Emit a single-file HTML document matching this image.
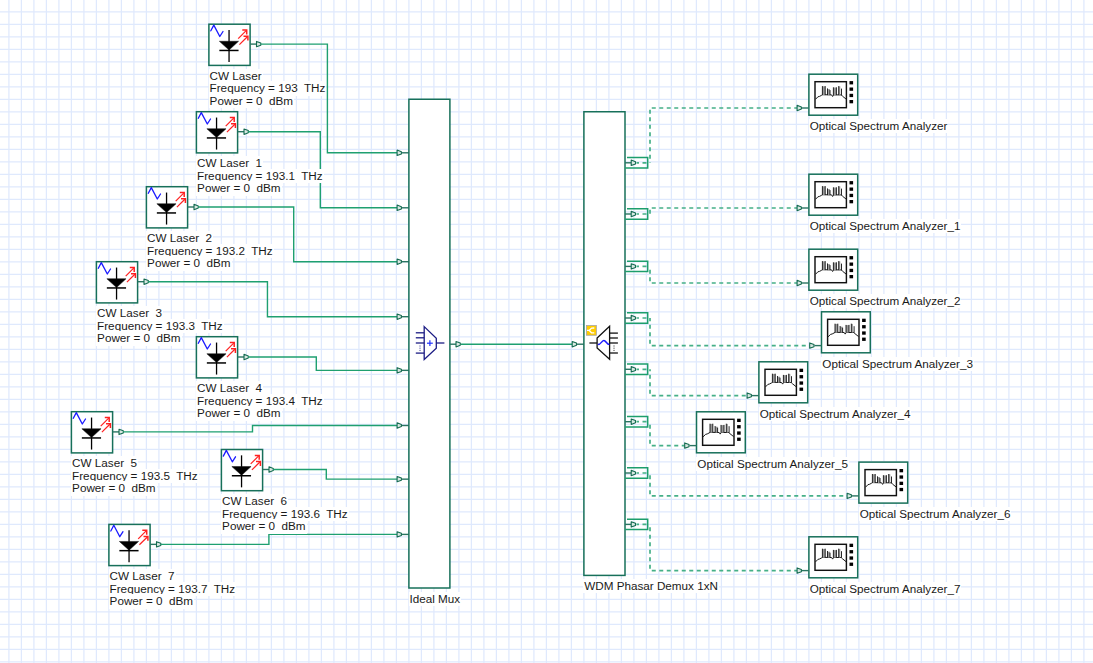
<!DOCTYPE html>
<html><head><meta charset="utf-8"><style>
html,body{margin:0;padding:0;width:1093px;height:663px;overflow:hidden;background:#fff}
.t{position:absolute;font-family:"Liberation Sans",sans-serif;font-size:11.7px;line-height:12.5px;color:#1a1a1a;white-space:nowrap}
.t span{background:#fff;padding:0 1px 1.5px 1px;margin-left:-1px}
svg{position:absolute;left:0;top:0}
#wrap{position:absolute;left:0;top:0;width:1093px;height:663px;filter:none}
</style></head><body><div id="wrap">
<svg width="1093" height="663" viewBox="0 0 1093 663">
<g stroke="#dfe9fd" stroke-width="1.25"><line x1="8.90" y1="0" x2="8.90" y2="663"/><line x1="21.40" y1="0" x2="21.40" y2="663"/><line x1="33.90" y1="0" x2="33.90" y2="663"/><line x1="46.40" y1="0" x2="46.40" y2="663"/><line x1="58.90" y1="0" x2="58.90" y2="663"/><line x1="71.40" y1="0" x2="71.40" y2="663"/><line x1="83.90" y1="0" x2="83.90" y2="663"/><line x1="96.40" y1="0" x2="96.40" y2="663"/><line x1="108.90" y1="0" x2="108.90" y2="663"/><line x1="121.40" y1="0" x2="121.40" y2="663"/><line x1="133.90" y1="0" x2="133.90" y2="663"/><line x1="146.40" y1="0" x2="146.40" y2="663"/><line x1="158.90" y1="0" x2="158.90" y2="663"/><line x1="171.40" y1="0" x2="171.40" y2="663"/><line x1="183.90" y1="0" x2="183.90" y2="663"/><line x1="196.40" y1="0" x2="196.40" y2="663"/><line x1="208.90" y1="0" x2="208.90" y2="663"/><line x1="221.40" y1="0" x2="221.40" y2="663"/><line x1="233.90" y1="0" x2="233.90" y2="663"/><line x1="246.40" y1="0" x2="246.40" y2="663"/><line x1="258.90" y1="0" x2="258.90" y2="663"/><line x1="271.40" y1="0" x2="271.40" y2="663"/><line x1="283.90" y1="0" x2="283.90" y2="663"/><line x1="296.40" y1="0" x2="296.40" y2="663"/><line x1="308.90" y1="0" x2="308.90" y2="663"/><line x1="321.40" y1="0" x2="321.40" y2="663"/><line x1="333.90" y1="0" x2="333.90" y2="663"/><line x1="346.40" y1="0" x2="346.40" y2="663"/><line x1="358.90" y1="0" x2="358.90" y2="663"/><line x1="371.40" y1="0" x2="371.40" y2="663"/><line x1="383.90" y1="0" x2="383.90" y2="663"/><line x1="396.40" y1="0" x2="396.40" y2="663"/><line x1="408.90" y1="0" x2="408.90" y2="663"/><line x1="421.40" y1="0" x2="421.40" y2="663"/><line x1="433.90" y1="0" x2="433.90" y2="663"/><line x1="446.40" y1="0" x2="446.40" y2="663"/><line x1="458.90" y1="0" x2="458.90" y2="663"/><line x1="471.40" y1="0" x2="471.40" y2="663"/><line x1="483.90" y1="0" x2="483.90" y2="663"/><line x1="496.40" y1="0" x2="496.40" y2="663"/><line x1="508.90" y1="0" x2="508.90" y2="663"/><line x1="521.40" y1="0" x2="521.40" y2="663"/><line x1="533.90" y1="0" x2="533.90" y2="663"/><line x1="546.40" y1="0" x2="546.40" y2="663"/><line x1="558.90" y1="0" x2="558.90" y2="663"/><line x1="571.40" y1="0" x2="571.40" y2="663"/><line x1="583.90" y1="0" x2="583.90" y2="663"/><line x1="596.40" y1="0" x2="596.40" y2="663"/><line x1="608.90" y1="0" x2="608.90" y2="663"/><line x1="621.40" y1="0" x2="621.40" y2="663"/><line x1="633.90" y1="0" x2="633.90" y2="663"/><line x1="646.40" y1="0" x2="646.40" y2="663"/><line x1="658.90" y1="0" x2="658.90" y2="663"/><line x1="671.40" y1="0" x2="671.40" y2="663"/><line x1="683.90" y1="0" x2="683.90" y2="663"/><line x1="696.40" y1="0" x2="696.40" y2="663"/><line x1="708.90" y1="0" x2="708.90" y2="663"/><line x1="721.40" y1="0" x2="721.40" y2="663"/><line x1="733.90" y1="0" x2="733.90" y2="663"/><line x1="746.40" y1="0" x2="746.40" y2="663"/><line x1="758.90" y1="0" x2="758.90" y2="663"/><line x1="771.40" y1="0" x2="771.40" y2="663"/><line x1="783.90" y1="0" x2="783.90" y2="663"/><line x1="796.40" y1="0" x2="796.40" y2="663"/><line x1="808.90" y1="0" x2="808.90" y2="663"/><line x1="821.40" y1="0" x2="821.40" y2="663"/><line x1="833.90" y1="0" x2="833.90" y2="663"/><line x1="846.40" y1="0" x2="846.40" y2="663"/><line x1="858.90" y1="0" x2="858.90" y2="663"/><line x1="871.40" y1="0" x2="871.40" y2="663"/><line x1="883.90" y1="0" x2="883.90" y2="663"/><line x1="896.40" y1="0" x2="896.40" y2="663"/><line x1="908.90" y1="0" x2="908.90" y2="663"/><line x1="921.40" y1="0" x2="921.40" y2="663"/><line x1="933.90" y1="0" x2="933.90" y2="663"/><line x1="946.40" y1="0" x2="946.40" y2="663"/><line x1="958.90" y1="0" x2="958.90" y2="663"/><line x1="971.40" y1="0" x2="971.40" y2="663"/><line x1="983.90" y1="0" x2="983.90" y2="663"/><line x1="996.40" y1="0" x2="996.40" y2="663"/><line x1="1008.90" y1="0" x2="1008.90" y2="663"/><line x1="1021.40" y1="0" x2="1021.40" y2="663"/><line x1="1033.90" y1="0" x2="1033.90" y2="663"/><line x1="1046.40" y1="0" x2="1046.40" y2="663"/><line x1="1058.90" y1="0" x2="1058.90" y2="663"/><line x1="1071.40" y1="0" x2="1071.40" y2="663"/><line x1="1083.90" y1="0" x2="1083.90" y2="663"/><line x1="0" y1="11.75" x2="1093" y2="11.75"/><line x1="0" y1="24.25" x2="1093" y2="24.25"/><line x1="0" y1="36.75" x2="1093" y2="36.75"/><line x1="0" y1="49.25" x2="1093" y2="49.25"/><line x1="0" y1="61.75" x2="1093" y2="61.75"/><line x1="0" y1="74.25" x2="1093" y2="74.25"/><line x1="0" y1="86.75" x2="1093" y2="86.75"/><line x1="0" y1="99.25" x2="1093" y2="99.25"/><line x1="0" y1="111.75" x2="1093" y2="111.75"/><line x1="0" y1="124.25" x2="1093" y2="124.25"/><line x1="0" y1="136.75" x2="1093" y2="136.75"/><line x1="0" y1="149.25" x2="1093" y2="149.25"/><line x1="0" y1="161.75" x2="1093" y2="161.75"/><line x1="0" y1="174.25" x2="1093" y2="174.25"/><line x1="0" y1="186.75" x2="1093" y2="186.75"/><line x1="0" y1="199.25" x2="1093" y2="199.25"/><line x1="0" y1="211.75" x2="1093" y2="211.75"/><line x1="0" y1="224.25" x2="1093" y2="224.25"/><line x1="0" y1="236.75" x2="1093" y2="236.75"/><line x1="0" y1="249.25" x2="1093" y2="249.25"/><line x1="0" y1="261.75" x2="1093" y2="261.75"/><line x1="0" y1="274.25" x2="1093" y2="274.25"/><line x1="0" y1="286.75" x2="1093" y2="286.75"/><line x1="0" y1="299.25" x2="1093" y2="299.25"/><line x1="0" y1="311.75" x2="1093" y2="311.75"/><line x1="0" y1="324.25" x2="1093" y2="324.25"/><line x1="0" y1="336.75" x2="1093" y2="336.75"/><line x1="0" y1="349.25" x2="1093" y2="349.25"/><line x1="0" y1="361.75" x2="1093" y2="361.75"/><line x1="0" y1="374.25" x2="1093" y2="374.25"/><line x1="0" y1="386.75" x2="1093" y2="386.75"/><line x1="0" y1="399.25" x2="1093" y2="399.25"/><line x1="0" y1="411.75" x2="1093" y2="411.75"/><line x1="0" y1="424.25" x2="1093" y2="424.25"/><line x1="0" y1="436.75" x2="1093" y2="436.75"/><line x1="0" y1="449.25" x2="1093" y2="449.25"/><line x1="0" y1="461.75" x2="1093" y2="461.75"/><line x1="0" y1="474.25" x2="1093" y2="474.25"/><line x1="0" y1="486.75" x2="1093" y2="486.75"/><line x1="0" y1="499.25" x2="1093" y2="499.25"/><line x1="0" y1="511.75" x2="1093" y2="511.75"/><line x1="0" y1="524.25" x2="1093" y2="524.25"/><line x1="0" y1="536.75" x2="1093" y2="536.75"/><line x1="0" y1="549.25" x2="1093" y2="549.25"/><line x1="0" y1="561.75" x2="1093" y2="561.75"/><line x1="0" y1="574.25" x2="1093" y2="574.25"/><line x1="0" y1="586.75" x2="1093" y2="586.75"/><line x1="0" y1="599.25" x2="1093" y2="599.25"/><line x1="0" y1="611.75" x2="1093" y2="611.75"/><line x1="0" y1="624.25" x2="1093" y2="624.25"/><line x1="0" y1="636.75" x2="1093" y2="636.75"/><line x1="0" y1="649.25" x2="1093" y2="649.25"/><line x1="0" y1="661.75" x2="1093" y2="661.75"/></g>
<g fill="none">
<rect x="208.90" y="24.20" width="41.20" height="41.20" stroke="#17705a" stroke-width="1.5" fill="#fff"/>
<line x1="229.05" y1="30.05" x2="229.05" y2="62.05" stroke="#000" stroke-width="1.3" />
<polygon points="219.35,41.25 238.55,41.25 229.05,50.05" stroke="#111" stroke-width="0.5" fill="#000" />
<line x1="219.35" y1="50.45" x2="238.55" y2="50.45" stroke="#000" stroke-width="1.5" />
<polyline points="210.80,30.80 213.80,25.10 219.80,36.50 223.00,31.50" stroke="#1a1aff" stroke-width="1.3" fill="none" stroke-linejoin="round" stroke-linecap="round"/>
<line x1="238.20" y1="38.60" x2="246.40" y2="30.40" stroke="#ff2020" stroke-width="1.2" />
<polyline points="242.30,30.10 246.70,30.10 246.70,34.50" stroke="#ff2020" stroke-width="1.5" fill="none" stroke-linejoin="miter"/>
<line x1="239.40" y1="44.60" x2="247.60" y2="36.50" stroke="#ff2020" stroke-width="1.2" />
<polyline points="243.50,36.20 247.90,36.20 247.90,40.60" stroke="#ff2020" stroke-width="1.5" fill="none" stroke-linejoin="miter"/>
<line x1="250.10" y1="44.10" x2="256.50" y2="44.10" stroke="#2a7562" stroke-width="1.4" />
<polygon points="256.50,41.40 260.80,43.00 260.80,45.20 256.50,46.80" stroke="#146a50" stroke-width="1.1" fill="#d8e9e2" stroke-linejoin="round"/>
<rect x="196.40" y="111.70" width="41.20" height="41.20" stroke="#17705a" stroke-width="1.5" fill="#fff"/>
<line x1="216.55" y1="117.55" x2="216.55" y2="149.55" stroke="#000" stroke-width="1.3" />
<polygon points="206.85,128.75 226.05,128.75 216.55,137.55" stroke="#111" stroke-width="0.5" fill="#000" />
<line x1="206.85" y1="137.95" x2="226.05" y2="137.95" stroke="#000" stroke-width="1.5" />
<polyline points="198.30,118.30 201.30,112.60 207.30,124.00 210.50,119.00" stroke="#1a1aff" stroke-width="1.3" fill="none" stroke-linejoin="round" stroke-linecap="round"/>
<line x1="225.70" y1="126.10" x2="233.90" y2="117.90" stroke="#ff2020" stroke-width="1.2" />
<polyline points="229.80,117.60 234.20,117.60 234.20,122.00" stroke="#ff2020" stroke-width="1.5" fill="none" stroke-linejoin="miter"/>
<line x1="226.90" y1="132.10" x2="235.10" y2="124.00" stroke="#ff2020" stroke-width="1.2" />
<polyline points="231.00,123.70 235.40,123.70 235.40,128.10" stroke="#ff2020" stroke-width="1.5" fill="none" stroke-linejoin="miter"/>
<line x1="237.60" y1="131.70" x2="244.00" y2="131.70" stroke="#2a7562" stroke-width="1.4" />
<polygon points="244.00,129.00 248.30,130.60 248.30,132.80 244.00,134.40" stroke="#146a50" stroke-width="1.1" fill="#d8e9e2" stroke-linejoin="round"/>
<rect x="146.40" y="186.70" width="41.20" height="41.20" stroke="#17705a" stroke-width="1.5" fill="#fff"/>
<line x1="166.55" y1="192.55" x2="166.55" y2="224.55" stroke="#000" stroke-width="1.3" />
<polygon points="156.85,203.75 176.05,203.75 166.55,212.55" stroke="#111" stroke-width="0.5" fill="#000" />
<line x1="156.85" y1="212.95" x2="176.05" y2="212.95" stroke="#000" stroke-width="1.5" />
<polyline points="148.30,193.30 151.30,187.60 157.30,199.00 160.50,194.00" stroke="#1a1aff" stroke-width="1.3" fill="none" stroke-linejoin="round" stroke-linecap="round"/>
<line x1="175.70" y1="201.10" x2="183.90" y2="192.90" stroke="#ff2020" stroke-width="1.2" />
<polyline points="179.80,192.60 184.20,192.60 184.20,197.00" stroke="#ff2020" stroke-width="1.5" fill="none" stroke-linejoin="miter"/>
<line x1="176.90" y1="207.10" x2="185.10" y2="199.00" stroke="#ff2020" stroke-width="1.2" />
<polyline points="181.00,198.70 185.40,198.70 185.40,203.10" stroke="#ff2020" stroke-width="1.5" fill="none" stroke-linejoin="miter"/>
<line x1="187.60" y1="207.00" x2="194.00" y2="207.00" stroke="#2a7562" stroke-width="1.4" />
<polygon points="194.00,204.30 198.30,205.90 198.30,208.10 194.00,209.70" stroke="#146a50" stroke-width="1.1" fill="#d8e9e2" stroke-linejoin="round"/>
<rect x="96.40" y="261.70" width="41.20" height="41.20" stroke="#17705a" stroke-width="1.5" fill="#fff"/>
<line x1="116.55" y1="267.55" x2="116.55" y2="299.55" stroke="#000" stroke-width="1.3" />
<polygon points="106.85,278.75 126.05,278.75 116.55,287.55" stroke="#111" stroke-width="0.5" fill="#000" />
<line x1="106.85" y1="287.95" x2="126.05" y2="287.95" stroke="#000" stroke-width="1.5" />
<polyline points="98.30,268.30 101.30,262.60 107.30,274.00 110.50,269.00" stroke="#1a1aff" stroke-width="1.3" fill="none" stroke-linejoin="round" stroke-linecap="round"/>
<line x1="125.70" y1="276.10" x2="133.90" y2="267.90" stroke="#ff2020" stroke-width="1.2" />
<polyline points="129.80,267.60 134.20,267.60 134.20,272.00" stroke="#ff2020" stroke-width="1.5" fill="none" stroke-linejoin="miter"/>
<line x1="126.90" y1="282.10" x2="135.10" y2="274.00" stroke="#ff2020" stroke-width="1.2" />
<polyline points="131.00,273.70 135.40,273.70 135.40,278.10" stroke="#ff2020" stroke-width="1.5" fill="none" stroke-linejoin="miter"/>
<line x1="137.60" y1="281.70" x2="144.00" y2="281.70" stroke="#2a7562" stroke-width="1.4" />
<polygon points="144.00,279.00 148.30,280.60 148.30,282.80 144.00,284.40" stroke="#146a50" stroke-width="1.1" fill="#d8e9e2" stroke-linejoin="round"/>
<rect x="196.40" y="336.70" width="41.20" height="41.20" stroke="#17705a" stroke-width="1.5" fill="#fff"/>
<line x1="216.55" y1="342.55" x2="216.55" y2="374.55" stroke="#000" stroke-width="1.3" />
<polygon points="206.85,353.75 226.05,353.75 216.55,362.55" stroke="#111" stroke-width="0.5" fill="#000" />
<line x1="206.85" y1="362.95" x2="226.05" y2="362.95" stroke="#000" stroke-width="1.5" />
<polyline points="198.30,343.30 201.30,337.60 207.30,349.00 210.50,344.00" stroke="#1a1aff" stroke-width="1.3" fill="none" stroke-linejoin="round" stroke-linecap="round"/>
<line x1="225.70" y1="351.10" x2="233.90" y2="342.90" stroke="#ff2020" stroke-width="1.2" />
<polyline points="229.80,342.60 234.20,342.60 234.20,347.00" stroke="#ff2020" stroke-width="1.5" fill="none" stroke-linejoin="miter"/>
<line x1="226.90" y1="357.10" x2="235.10" y2="349.00" stroke="#ff2020" stroke-width="1.2" />
<polyline points="231.00,348.70 235.40,348.70 235.40,353.10" stroke="#ff2020" stroke-width="1.5" fill="none" stroke-linejoin="miter"/>
<line x1="237.60" y1="357.00" x2="244.00" y2="357.00" stroke="#2a7562" stroke-width="1.4" />
<polygon points="244.00,354.30 248.30,355.90 248.30,358.10 244.00,359.70" stroke="#146a50" stroke-width="1.1" fill="#d8e9e2" stroke-linejoin="round"/>
<rect x="71.40" y="411.70" width="41.20" height="41.20" stroke="#17705a" stroke-width="1.5" fill="#fff"/>
<line x1="91.55" y1="417.55" x2="91.55" y2="449.55" stroke="#000" stroke-width="1.3" />
<polygon points="81.85,428.75 101.05,428.75 91.55,437.55" stroke="#111" stroke-width="0.5" fill="#000" />
<line x1="81.85" y1="437.95" x2="101.05" y2="437.95" stroke="#000" stroke-width="1.5" />
<polyline points="73.30,418.30 76.30,412.60 82.30,424.00 85.50,419.00" stroke="#1a1aff" stroke-width="1.3" fill="none" stroke-linejoin="round" stroke-linecap="round"/>
<line x1="100.70" y1="426.10" x2="108.90" y2="417.90" stroke="#ff2020" stroke-width="1.2" />
<polyline points="104.80,417.60 109.20,417.60 109.20,422.00" stroke="#ff2020" stroke-width="1.5" fill="none" stroke-linejoin="miter"/>
<line x1="101.90" y1="432.10" x2="110.10" y2="424.00" stroke="#ff2020" stroke-width="1.2" />
<polyline points="106.00,423.70 110.40,423.70 110.40,428.10" stroke="#ff2020" stroke-width="1.5" fill="none" stroke-linejoin="miter"/>
<line x1="112.60" y1="431.90" x2="119.00" y2="431.90" stroke="#2a7562" stroke-width="1.4" />
<polygon points="119.00,429.20 123.30,430.80 123.30,433.00 119.00,434.60" stroke="#146a50" stroke-width="1.1" fill="#d8e9e2" stroke-linejoin="round"/>
<rect x="221.40" y="449.50" width="41.20" height="41.20" stroke="#17705a" stroke-width="1.5" fill="#fff"/>
<line x1="241.55" y1="455.35" x2="241.55" y2="487.35" stroke="#000" stroke-width="1.3" />
<polygon points="231.85,466.55 251.05,466.55 241.55,475.35" stroke="#111" stroke-width="0.5" fill="#000" />
<line x1="231.85" y1="475.75" x2="251.05" y2="475.75" stroke="#000" stroke-width="1.5" />
<polyline points="223.30,456.10 226.30,450.40 232.30,461.80 235.50,456.80" stroke="#1a1aff" stroke-width="1.3" fill="none" stroke-linejoin="round" stroke-linecap="round"/>
<line x1="250.70" y1="463.90" x2="258.90" y2="455.70" stroke="#ff2020" stroke-width="1.2" />
<polyline points="254.80,455.40 259.20,455.40 259.20,459.80" stroke="#ff2020" stroke-width="1.5" fill="none" stroke-linejoin="miter"/>
<line x1="251.90" y1="469.90" x2="260.10" y2="461.80" stroke="#ff2020" stroke-width="1.2" />
<polyline points="256.00,461.50 260.40,461.50 260.40,465.90" stroke="#ff2020" stroke-width="1.5" fill="none" stroke-linejoin="miter"/>
<line x1="262.60" y1="469.50" x2="269.00" y2="469.50" stroke="#2a7562" stroke-width="1.4" />
<polygon points="269.00,466.80 273.30,468.40 273.30,470.60 269.00,472.20" stroke="#146a50" stroke-width="1.1" fill="#d8e9e2" stroke-linejoin="round"/>
<rect x="108.90" y="524.40" width="41.20" height="41.20" stroke="#17705a" stroke-width="1.5" fill="#fff"/>
<line x1="129.05" y1="530.25" x2="129.05" y2="562.25" stroke="#000" stroke-width="1.3" />
<polygon points="119.35,541.45 138.55,541.45 129.05,550.25" stroke="#111" stroke-width="0.5" fill="#000" />
<line x1="119.35" y1="550.65" x2="138.55" y2="550.65" stroke="#000" stroke-width="1.5" />
<polyline points="110.80,531.00 113.80,525.30 119.80,536.70 123.00,531.70" stroke="#1a1aff" stroke-width="1.3" fill="none" stroke-linejoin="round" stroke-linecap="round"/>
<line x1="138.20" y1="538.80" x2="146.40" y2="530.60" stroke="#ff2020" stroke-width="1.2" />
<polyline points="142.30,530.30 146.70,530.30 146.70,534.70" stroke="#ff2020" stroke-width="1.5" fill="none" stroke-linejoin="miter"/>
<line x1="139.40" y1="544.80" x2="147.60" y2="536.70" stroke="#ff2020" stroke-width="1.2" />
<polyline points="143.50,536.40 147.90,536.40 147.90,540.80" stroke="#ff2020" stroke-width="1.5" fill="none" stroke-linejoin="miter"/>
<line x1="150.10" y1="544.35" x2="156.50" y2="544.35" stroke="#2a7562" stroke-width="1.4" />
<polygon points="156.50,541.65 160.80,543.25 160.80,545.45 156.50,547.05" stroke="#146a50" stroke-width="1.1" fill="#d8e9e2" stroke-linejoin="round"/>
<polyline points="260.80,44.10 327.40,44.10 327.40,152.80 397.10,152.80" stroke="#1fa070" stroke-width="1.4" fill="none" stroke-linejoin="miter"/>
<polyline points="248.30,131.70 320.30,131.70 320.30,207.80 397.10,207.80" stroke="#1fa070" stroke-width="1.4" fill="none" stroke-linejoin="miter"/>
<polyline points="198.30,207.00 293.70,207.00 293.70,261.70 397.10,261.70" stroke="#1fa070" stroke-width="1.4" fill="none" stroke-linejoin="miter"/>
<polyline points="148.30,281.70 267.45,281.70 267.45,316.70 397.10,316.70" stroke="#1fa070" stroke-width="1.4" fill="none" stroke-linejoin="miter"/>
<polyline points="248.30,357.00 316.30,357.00 316.30,370.35 397.10,370.35" stroke="#1fa070" stroke-width="1.4" fill="none" stroke-linejoin="miter"/>
<polyline points="123.30,431.90 252.50,431.90 252.50,425.50 397.10,425.50" stroke="#1fa070" stroke-width="1.4" fill="none" stroke-linejoin="miter"/>
<polyline points="273.30,469.50 326.30,469.50 326.30,479.15 397.10,479.15" stroke="#1fa070" stroke-width="1.4" fill="none" stroke-linejoin="miter"/>
<polyline points="160.80,544.35 268.90,544.35 268.90,534.40 397.10,534.40" stroke="#1fa070" stroke-width="1.4" fill="none" stroke-linejoin="miter"/>
<line x1="401.50" y1="152.80" x2="408.90" y2="152.80" stroke="#2a7562" stroke-width="1.4" />
<polygon points="397.10,150.10 401.40,151.70 401.40,153.90 397.10,155.50" stroke="#146a50" stroke-width="1.1" fill="#d8e9e2" stroke-linejoin="round"/>
<line x1="401.50" y1="207.80" x2="408.90" y2="207.80" stroke="#2a7562" stroke-width="1.4" />
<polygon points="397.10,205.10 401.40,206.70 401.40,208.90 397.10,210.50" stroke="#146a50" stroke-width="1.1" fill="#d8e9e2" stroke-linejoin="round"/>
<line x1="401.50" y1="261.70" x2="408.90" y2="261.70" stroke="#2a7562" stroke-width="1.4" />
<polygon points="397.10,259.00 401.40,260.60 401.40,262.80 397.10,264.40" stroke="#146a50" stroke-width="1.1" fill="#d8e9e2" stroke-linejoin="round"/>
<line x1="401.50" y1="316.70" x2="408.90" y2="316.70" stroke="#2a7562" stroke-width="1.4" />
<polygon points="397.10,314.00 401.40,315.60 401.40,317.80 397.10,319.40" stroke="#146a50" stroke-width="1.1" fill="#d8e9e2" stroke-linejoin="round"/>
<line x1="401.50" y1="370.35" x2="408.90" y2="370.35" stroke="#2a7562" stroke-width="1.4" />
<polygon points="397.10,367.65 401.40,369.25 401.40,371.45 397.10,373.05" stroke="#146a50" stroke-width="1.1" fill="#d8e9e2" stroke-linejoin="round"/>
<line x1="401.50" y1="425.50" x2="408.90" y2="425.50" stroke="#2a7562" stroke-width="1.4" />
<polygon points="397.10,422.80 401.40,424.40 401.40,426.60 397.10,428.20" stroke="#146a50" stroke-width="1.1" fill="#d8e9e2" stroke-linejoin="round"/>
<line x1="401.50" y1="479.15" x2="408.90" y2="479.15" stroke="#2a7562" stroke-width="1.4" />
<polygon points="397.10,476.45 401.40,478.05 401.40,480.25 397.10,481.85" stroke="#146a50" stroke-width="1.1" fill="#d8e9e2" stroke-linejoin="round"/>
<line x1="401.50" y1="534.40" x2="408.90" y2="534.40" stroke="#2a7562" stroke-width="1.4" />
<polygon points="397.10,531.70 401.40,533.30 401.40,535.50 397.10,537.10" stroke="#146a50" stroke-width="1.1" fill="#d8e9e2" stroke-linejoin="round"/>
<rect x="408.90" y="99.25" width="41.00" height="488.75" stroke="#17705a" stroke-width="1.5" fill="#fff"/>
<polygon points="424.20,326.60 436.30,338.20 436.30,348.20 424.20,359.40" stroke="#1c1c84" stroke-width="1.3" fill="none" />
<line x1="415.80" y1="332.80" x2="424.20" y2="332.80" stroke="#1c1c84" stroke-width="1.3" />
<line x1="415.80" y1="337.80" x2="424.20" y2="337.80" stroke="#1c1c84" stroke-width="1.3" />
<line x1="415.80" y1="343.00" x2="424.20" y2="343.00" stroke="#1c1c84" stroke-width="1.3" />
<line x1="415.80" y1="353.10" x2="424.20" y2="353.10" stroke="#1c1c84" stroke-width="1.3" />
<line x1="420" y1="345.5" x2="420" y2="351" stroke="#1c1c84" stroke-width="0.9" stroke-dasharray="1,1.2"/>
<line x1="436.30" y1="343.00" x2="444.40" y2="343.00" stroke="#1c1c84" stroke-width="1.3" />
<line x1="427.00" y1="343.20" x2="432.80" y2="343.20" stroke="#2030ff" stroke-width="1.2" />
<line x1="429.90" y1="340.30" x2="429.90" y2="346.10" stroke="#2030ff" stroke-width="1.2" />
<line x1="449.90" y1="344.20" x2="456.00" y2="344.20" stroke="#2a7562" stroke-width="1.4" />
<polygon points="456.00,341.50 460.30,343.10 460.30,345.30 456.00,346.90" stroke="#146a50" stroke-width="1.1" fill="#d8e9e2" stroke-linejoin="round"/>
<line x1="461.00" y1="344.20" x2="572.20" y2="344.20" stroke="#1fa070" stroke-width="1.4" />
<line x1="576.50" y1="344.20" x2="583.90" y2="344.20" stroke="#2a7562" stroke-width="1.4" />
<polygon points="572.20,341.50 576.50,343.10 576.50,345.30 572.20,346.90" stroke="#146a50" stroke-width="1.1" fill="#d8e9e2" stroke-linejoin="round"/>
<rect x="583.90" y="111.75" width="41.10" height="463.65" stroke="#17705a" stroke-width="1.5" fill="#fff"/>
<rect x="586.55" y="325.55" width="9.8" height="9.7" fill="#ffcc00" stroke="#a3a3a8" stroke-width="0.8"/>
<path d="M587.0,330.45 L589.2,330.45 L591.5,328.1 L594.3,328.0 M589.2,330.45 L591.5,332.8 L594.3,332.9" stroke="#fff" stroke-width="1.3" fill="none" stroke-linejoin="round"/>
<polygon points="597.10,338.00 609.60,326.30 609.60,359.30 597.10,348.00" stroke="#111" stroke-width="1.3" fill="none" />
<line x1="589.40" y1="343.00" x2="597.10" y2="343.00" stroke="#111" stroke-width="1.3" />
<line x1="609.60" y1="333.10" x2="617.90" y2="333.10" stroke="#111" stroke-width="1.3" />
<line x1="609.60" y1="338.00" x2="617.90" y2="338.00" stroke="#111" stroke-width="1.3" />
<line x1="609.60" y1="343.00" x2="617.90" y2="343.00" stroke="#111" stroke-width="1.3" />
<line x1="609.60" y1="353.00" x2="617.90" y2="353.00" stroke="#111" stroke-width="1.3" />
<line x1="614" y1="345.5" x2="614" y2="351" stroke="#111" stroke-width="0.9" stroke-dasharray="1,1.2"/>
<path d="M597.8,344.6 C601.2,344.6 601.8,340.4 603.9,340.4 C606,340.4 606.6,344.6 609.4,344.6" stroke="#1a1aff" stroke-width="1.5" fill="none"/>
<line x1="650.00" y1="108.00" x2="797.10" y2="108.00" stroke="#45b088" stroke-width="1.7" stroke-dasharray="4,3.5" stroke-dashoffset="5.75"/>
<line x1="650.00" y1="108.00" x2="650.00" y2="162.80" stroke="#45b088" stroke-width="1.7" stroke-dasharray="4,3.5" stroke-dashoffset="5.75"/>
<line x1="650.00" y1="162.80" x2="636.50" y2="162.80" stroke="#45b088" stroke-width="1.7" stroke-dasharray="4,3.5" stroke-dashoffset="4"/>
<polyline points="627.00,157.60 647.70,157.60 647.70,168.00 625.20,168.00" stroke="#1d9e6c" stroke-width="1.5" fill="none" />
<line x1="625.00" y1="162.80" x2="631.20" y2="162.80" stroke="#2a7562" stroke-width="1.4" />
<polygon points="631.20,160.10 635.50,161.70 635.50,163.90 631.20,165.50" stroke="#146a50" stroke-width="1.1" fill="#d8e9e2" stroke-linejoin="round"/>
<line x1="650.00" y1="208.00" x2="797.10" y2="208.00" stroke="#45b088" stroke-width="1.7" stroke-dasharray="4,3.5" stroke-dashoffset="5.75"/>
<line x1="650.00" y1="208.00" x2="650.00" y2="214.00" stroke="#45b088" stroke-width="1.7" stroke-dasharray="4,3.5" stroke-dashoffset="5.75"/>
<line x1="650.00" y1="214.00" x2="636.50" y2="214.00" stroke="#45b088" stroke-width="1.7" stroke-dasharray="4,3.5" stroke-dashoffset="4"/>
<polyline points="627.00,208.80 647.70,208.80 647.70,219.20 625.20,219.20" stroke="#1d9e6c" stroke-width="1.5" fill="none" />
<line x1="625.00" y1="214.00" x2="631.20" y2="214.00" stroke="#2a7562" stroke-width="1.4" />
<polygon points="631.20,211.30 635.50,212.90 635.50,215.10 631.20,216.70" stroke="#146a50" stroke-width="1.1" fill="#d8e9e2" stroke-linejoin="round"/>
<line x1="650.00" y1="283.00" x2="797.10" y2="283.00" stroke="#45b088" stroke-width="1.7" stroke-dasharray="4,3.5" stroke-dashoffset="5.75"/>
<line x1="650.00" y1="283.00" x2="650.00" y2="266.40" stroke="#45b088" stroke-width="1.7" stroke-dasharray="4,3.5" stroke-dashoffset="5.75"/>
<line x1="650.00" y1="266.40" x2="636.50" y2="266.40" stroke="#45b088" stroke-width="1.7" stroke-dasharray="4,3.5" stroke-dashoffset="4"/>
<polyline points="627.00,261.20 647.70,261.20 647.70,271.60 625.20,271.60" stroke="#1d9e6c" stroke-width="1.5" fill="none" />
<line x1="625.00" y1="266.40" x2="631.20" y2="266.40" stroke="#2a7562" stroke-width="1.4" />
<polygon points="631.20,263.70 635.50,265.30 635.50,267.50 631.20,269.10" stroke="#146a50" stroke-width="1.1" fill="#d8e9e2" stroke-linejoin="round"/>
<line x1="650.00" y1="345.60" x2="809.70" y2="345.60" stroke="#45b088" stroke-width="1.7" stroke-dasharray="4,3.5" stroke-dashoffset="5.75"/>
<line x1="650.00" y1="345.60" x2="650.00" y2="318.00" stroke="#45b088" stroke-width="1.7" stroke-dasharray="4,3.5" stroke-dashoffset="5.75"/>
<line x1="650.00" y1="318.00" x2="636.50" y2="318.00" stroke="#45b088" stroke-width="1.7" stroke-dasharray="4,3.5" stroke-dashoffset="4"/>
<polyline points="627.00,312.80 647.70,312.80 647.70,323.20 625.20,323.20" stroke="#1d9e6c" stroke-width="1.5" fill="none" />
<line x1="625.00" y1="318.00" x2="631.20" y2="318.00" stroke="#2a7562" stroke-width="1.4" />
<polygon points="631.20,315.30 635.50,316.90 635.50,319.10 631.20,320.70" stroke="#146a50" stroke-width="1.1" fill="#d8e9e2" stroke-linejoin="round"/>
<line x1="650.00" y1="395.60" x2="747.10" y2="395.60" stroke="#45b088" stroke-width="1.7" stroke-dasharray="4,3.5" stroke-dashoffset="5.75"/>
<line x1="650.00" y1="395.60" x2="650.00" y2="369.30" stroke="#45b088" stroke-width="1.7" stroke-dasharray="4,3.5" stroke-dashoffset="5.75"/>
<line x1="650.00" y1="369.30" x2="636.50" y2="369.30" stroke="#45b088" stroke-width="1.7" stroke-dasharray="4,3.5" stroke-dashoffset="4"/>
<polyline points="627.00,364.10 647.70,364.10 647.70,374.50 625.20,374.50" stroke="#1d9e6c" stroke-width="1.5" fill="none" />
<line x1="625.00" y1="369.30" x2="631.20" y2="369.30" stroke="#2a7562" stroke-width="1.4" />
<polygon points="631.20,366.60 635.50,368.20 635.50,370.40 631.20,372.00" stroke="#146a50" stroke-width="1.1" fill="#d8e9e2" stroke-linejoin="round"/>
<line x1="650.00" y1="445.60" x2="684.70" y2="445.60" stroke="#45b088" stroke-width="1.7" stroke-dasharray="4,3.5" stroke-dashoffset="5.75"/>
<line x1="650.00" y1="445.60" x2="650.00" y2="421.70" stroke="#45b088" stroke-width="1.7" stroke-dasharray="4,3.5" stroke-dashoffset="5.75"/>
<line x1="650.00" y1="421.70" x2="636.50" y2="421.70" stroke="#45b088" stroke-width="1.7" stroke-dasharray="4,3.5" stroke-dashoffset="4"/>
<polyline points="627.00,416.50 647.70,416.50 647.70,426.90 625.20,426.90" stroke="#1d9e6c" stroke-width="1.5" fill="none" />
<line x1="625.00" y1="421.70" x2="631.20" y2="421.70" stroke="#2a7562" stroke-width="1.4" />
<polygon points="631.20,419.00 635.50,420.60 635.50,422.80 631.20,424.40" stroke="#146a50" stroke-width="1.1" fill="#d8e9e2" stroke-linejoin="round"/>
<line x1="650.00" y1="495.90" x2="847.10" y2="495.90" stroke="#45b088" stroke-width="1.7" stroke-dasharray="4,3.5" stroke-dashoffset="5.75"/>
<line x1="650.00" y1="495.90" x2="650.00" y2="473.00" stroke="#45b088" stroke-width="1.7" stroke-dasharray="4,3.5" stroke-dashoffset="5.75"/>
<line x1="650.00" y1="473.00" x2="636.50" y2="473.00" stroke="#45b088" stroke-width="1.7" stroke-dasharray="4,3.5" stroke-dashoffset="4"/>
<polyline points="627.00,467.80 647.70,467.80 647.70,478.20 625.20,478.20" stroke="#1d9e6c" stroke-width="1.5" fill="none" />
<line x1="625.00" y1="473.00" x2="631.20" y2="473.00" stroke="#2a7562" stroke-width="1.4" />
<polygon points="631.20,470.30 635.50,471.90 635.50,474.10 631.20,475.70" stroke="#146a50" stroke-width="1.1" fill="#d8e9e2" stroke-linejoin="round"/>
<line x1="650.00" y1="570.60" x2="797.10" y2="570.60" stroke="#45b088" stroke-width="1.7" stroke-dasharray="4,3.5" stroke-dashoffset="5.75"/>
<line x1="650.00" y1="570.60" x2="650.00" y2="524.40" stroke="#45b088" stroke-width="1.7" stroke-dasharray="4,3.5" stroke-dashoffset="5.75"/>
<line x1="650.00" y1="524.40" x2="636.50" y2="524.40" stroke="#45b088" stroke-width="1.7" stroke-dasharray="4,3.5" stroke-dashoffset="4"/>
<polyline points="627.00,519.20 647.70,519.20 647.70,529.60 625.20,529.60" stroke="#1d9e6c" stroke-width="1.5" fill="none" />
<line x1="625.00" y1="524.40" x2="631.20" y2="524.40" stroke="#2a7562" stroke-width="1.4" />
<polygon points="631.20,521.70 635.50,523.30 635.50,525.50 631.20,527.10" stroke="#146a50" stroke-width="1.1" fill="#d8e9e2" stroke-linejoin="round"/>
<rect x="808.90" y="74.20" width="48.80" height="41.00" stroke="#17705a" stroke-width="1.5" fill="#fff"/>
<rect x="815.00" y="81.70" width="31.4" height="26.0" fill="none" stroke="#111" stroke-width="1.45"/>
<rect x="849.50" y="81.10" width="3.6" height="3.3" fill="#000"/>
<rect x="849.50" y="87.50" width="3.6" height="3.3" fill="#000"/>
<rect x="849.50" y="93.80" width="3.6" height="3.3" fill="#000"/>
<rect x="849.50" y="100.00" width="3.6" height="3.3" fill="#000"/>
<path d="M815.50,99.30 L817.90,96.80 L819.60,96.35 L821.40,95.40 L822.60,94.70 L831.60,94.90 L832.60,96.50 L833.60,94.90 L841.20,94.90 L842.40,96.10 L846.00,99.00" stroke="#1a1a1a" stroke-width="1.0" fill="none" stroke-linejoin="round"/>
<rect x="822.40" y="86.30" width="2.80" height="8.80" fill="#9a9a9a"/>
<rect x="827.50" y="89.10" width="2.50" height="6.00" fill="#9a9a9a"/>
<rect x="833.40" y="87.50" width="3.00" height="7.60" fill="#9a9a9a"/>
<rect x="838.70" y="86.30" width="1.60" height="8.80" fill="#9a9a9a"/>
<line x1="822.40" y1="86.10" x2="822.40" y2="95.10" stroke="#111" stroke-width="0.9" />
<line x1="825.20" y1="86.10" x2="825.20" y2="95.10" stroke="#111" stroke-width="0.9" />
<line x1="827.50" y1="88.40" x2="827.50" y2="95.10" stroke="#111" stroke-width="0.9" />
<line x1="830.00" y1="90.10" x2="830.00" y2="95.10" stroke="#111" stroke-width="0.9" />
<line x1="833.40" y1="87.30" x2="833.40" y2="95.10" stroke="#111" stroke-width="0.9" />
<line x1="836.40" y1="87.30" x2="836.40" y2="95.10" stroke="#111" stroke-width="0.9" />
<line x1="838.70" y1="86.10" x2="838.70" y2="95.10" stroke="#111" stroke-width="0.9" />
<line x1="841.50" y1="88.60" x2="841.50" y2="95.10" stroke="#111" stroke-width="0.9" />
<line x1="801.90" y1="108.00" x2="808.90" y2="108.00" stroke="#2a7562" stroke-width="1.4" />
<polygon points="797.10,105.30 801.40,106.90 801.40,109.10 797.10,110.70" stroke="#146a50" stroke-width="1.1" fill="#d8e9e2" stroke-linejoin="round"/>
<rect x="808.90" y="174.20" width="48.80" height="41.00" stroke="#17705a" stroke-width="1.5" fill="#fff"/>
<rect x="815.00" y="181.70" width="31.4" height="26.0" fill="none" stroke="#111" stroke-width="1.45"/>
<rect x="849.50" y="181.10" width="3.6" height="3.3" fill="#000"/>
<rect x="849.50" y="187.50" width="3.6" height="3.3" fill="#000"/>
<rect x="849.50" y="193.80" width="3.6" height="3.3" fill="#000"/>
<rect x="849.50" y="200.00" width="3.6" height="3.3" fill="#000"/>
<path d="M815.50,199.30 L817.90,196.80 L819.60,196.35 L821.40,195.40 L822.60,194.70 L831.60,194.90 L832.60,196.50 L833.60,194.90 L841.20,194.90 L842.40,196.10 L846.00,199.00" stroke="#1a1a1a" stroke-width="1.0" fill="none" stroke-linejoin="round"/>
<rect x="822.40" y="186.30" width="2.80" height="8.80" fill="#9a9a9a"/>
<rect x="827.50" y="189.10" width="2.50" height="6.00" fill="#9a9a9a"/>
<rect x="833.40" y="187.50" width="3.00" height="7.60" fill="#9a9a9a"/>
<rect x="838.70" y="186.30" width="1.60" height="8.80" fill="#9a9a9a"/>
<line x1="822.40" y1="186.10" x2="822.40" y2="195.10" stroke="#111" stroke-width="0.9" />
<line x1="825.20" y1="186.10" x2="825.20" y2="195.10" stroke="#111" stroke-width="0.9" />
<line x1="827.50" y1="188.40" x2="827.50" y2="195.10" stroke="#111" stroke-width="0.9" />
<line x1="830.00" y1="190.10" x2="830.00" y2="195.10" stroke="#111" stroke-width="0.9" />
<line x1="833.40" y1="187.30" x2="833.40" y2="195.10" stroke="#111" stroke-width="0.9" />
<line x1="836.40" y1="187.30" x2="836.40" y2="195.10" stroke="#111" stroke-width="0.9" />
<line x1="838.70" y1="186.10" x2="838.70" y2="195.10" stroke="#111" stroke-width="0.9" />
<line x1="841.50" y1="188.60" x2="841.50" y2="195.10" stroke="#111" stroke-width="0.9" />
<line x1="801.90" y1="208.00" x2="808.90" y2="208.00" stroke="#2a7562" stroke-width="1.4" />
<polygon points="797.10,205.30 801.40,206.90 801.40,209.10 797.10,210.70" stroke="#146a50" stroke-width="1.1" fill="#d8e9e2" stroke-linejoin="round"/>
<rect x="808.90" y="249.20" width="48.80" height="41.00" stroke="#17705a" stroke-width="1.5" fill="#fff"/>
<rect x="815.00" y="256.70" width="31.4" height="26.0" fill="none" stroke="#111" stroke-width="1.45"/>
<rect x="849.50" y="256.10" width="3.6" height="3.3" fill="#000"/>
<rect x="849.50" y="262.50" width="3.6" height="3.3" fill="#000"/>
<rect x="849.50" y="268.80" width="3.6" height="3.3" fill="#000"/>
<rect x="849.50" y="275.00" width="3.6" height="3.3" fill="#000"/>
<path d="M815.50,274.30 L817.90,271.80 L819.60,271.35 L821.40,270.40 L822.60,269.70 L831.60,269.90 L832.60,271.50 L833.60,269.90 L841.20,269.90 L842.40,271.10 L846.00,274.00" stroke="#1a1a1a" stroke-width="1.0" fill="none" stroke-linejoin="round"/>
<rect x="822.40" y="261.30" width="2.80" height="8.80" fill="#9a9a9a"/>
<rect x="827.50" y="264.10" width="2.50" height="6.00" fill="#9a9a9a"/>
<rect x="833.40" y="262.50" width="3.00" height="7.60" fill="#9a9a9a"/>
<rect x="838.70" y="261.30" width="1.60" height="8.80" fill="#9a9a9a"/>
<line x1="822.40" y1="261.10" x2="822.40" y2="270.10" stroke="#111" stroke-width="0.9" />
<line x1="825.20" y1="261.10" x2="825.20" y2="270.10" stroke="#111" stroke-width="0.9" />
<line x1="827.50" y1="263.40" x2="827.50" y2="270.10" stroke="#111" stroke-width="0.9" />
<line x1="830.00" y1="265.10" x2="830.00" y2="270.10" stroke="#111" stroke-width="0.9" />
<line x1="833.40" y1="262.30" x2="833.40" y2="270.10" stroke="#111" stroke-width="0.9" />
<line x1="836.40" y1="262.30" x2="836.40" y2="270.10" stroke="#111" stroke-width="0.9" />
<line x1="838.70" y1="261.10" x2="838.70" y2="270.10" stroke="#111" stroke-width="0.9" />
<line x1="841.50" y1="263.60" x2="841.50" y2="270.10" stroke="#111" stroke-width="0.9" />
<line x1="801.90" y1="283.00" x2="808.90" y2="283.00" stroke="#2a7562" stroke-width="1.4" />
<polygon points="797.10,280.30 801.40,281.90 801.40,284.10 797.10,285.70" stroke="#146a50" stroke-width="1.1" fill="#d8e9e2" stroke-linejoin="round"/>
<rect x="821.50" y="311.80" width="48.80" height="41.00" stroke="#17705a" stroke-width="1.5" fill="#fff"/>
<rect x="827.60" y="319.30" width="31.4" height="26.0" fill="none" stroke="#111" stroke-width="1.45"/>
<rect x="862.10" y="318.70" width="3.6" height="3.3" fill="#000"/>
<rect x="862.10" y="325.10" width="3.6" height="3.3" fill="#000"/>
<rect x="862.10" y="331.40" width="3.6" height="3.3" fill="#000"/>
<rect x="862.10" y="337.60" width="3.6" height="3.3" fill="#000"/>
<path d="M828.10,336.90 L830.50,334.40 L832.20,333.95 L834.00,333.00 L835.20,332.30 L844.20,332.50 L845.20,334.10 L846.20,332.50 L853.80,332.50 L855.00,333.70 L858.60,336.60" stroke="#1a1a1a" stroke-width="1.0" fill="none" stroke-linejoin="round"/>
<rect x="835.00" y="323.90" width="2.80" height="8.80" fill="#9a9a9a"/>
<rect x="840.10" y="326.70" width="2.50" height="6.00" fill="#9a9a9a"/>
<rect x="846.00" y="325.10" width="3.00" height="7.60" fill="#9a9a9a"/>
<rect x="851.30" y="323.90" width="1.60" height="8.80" fill="#9a9a9a"/>
<line x1="835.00" y1="323.70" x2="835.00" y2="332.70" stroke="#111" stroke-width="0.9" />
<line x1="837.80" y1="323.70" x2="837.80" y2="332.70" stroke="#111" stroke-width="0.9" />
<line x1="840.10" y1="326.00" x2="840.10" y2="332.70" stroke="#111" stroke-width="0.9" />
<line x1="842.60" y1="327.70" x2="842.60" y2="332.70" stroke="#111" stroke-width="0.9" />
<line x1="846.00" y1="324.90" x2="846.00" y2="332.70" stroke="#111" stroke-width="0.9" />
<line x1="849.00" y1="324.90" x2="849.00" y2="332.70" stroke="#111" stroke-width="0.9" />
<line x1="851.30" y1="323.70" x2="851.30" y2="332.70" stroke="#111" stroke-width="0.9" />
<line x1="854.10" y1="326.20" x2="854.10" y2="332.70" stroke="#111" stroke-width="0.9" />
<line x1="814.50" y1="345.60" x2="821.50" y2="345.60" stroke="#2a7562" stroke-width="1.4" />
<polygon points="809.70,342.90 814.00,344.50 814.00,346.70 809.70,348.30" stroke="#146a50" stroke-width="1.1" fill="#d8e9e2" stroke-linejoin="round"/>
<rect x="758.90" y="361.80" width="48.80" height="41.00" stroke="#17705a" stroke-width="1.5" fill="#fff"/>
<rect x="765.00" y="369.30" width="31.4" height="26.0" fill="none" stroke="#111" stroke-width="1.45"/>
<rect x="799.50" y="368.70" width="3.6" height="3.3" fill="#000"/>
<rect x="799.50" y="375.10" width="3.6" height="3.3" fill="#000"/>
<rect x="799.50" y="381.40" width="3.6" height="3.3" fill="#000"/>
<rect x="799.50" y="387.60" width="3.6" height="3.3" fill="#000"/>
<path d="M765.50,386.90 L767.90,384.40 L769.60,383.95 L771.40,383.00 L772.60,382.30 L781.60,382.50 L782.60,384.10 L783.60,382.50 L791.20,382.50 L792.40,383.70 L796.00,386.60" stroke="#1a1a1a" stroke-width="1.0" fill="none" stroke-linejoin="round"/>
<rect x="772.40" y="373.90" width="2.80" height="8.80" fill="#9a9a9a"/>
<rect x="777.50" y="376.70" width="2.50" height="6.00" fill="#9a9a9a"/>
<rect x="783.40" y="375.10" width="3.00" height="7.60" fill="#9a9a9a"/>
<rect x="788.70" y="373.90" width="1.60" height="8.80" fill="#9a9a9a"/>
<line x1="772.40" y1="373.70" x2="772.40" y2="382.70" stroke="#111" stroke-width="0.9" />
<line x1="775.20" y1="373.70" x2="775.20" y2="382.70" stroke="#111" stroke-width="0.9" />
<line x1="777.50" y1="376.00" x2="777.50" y2="382.70" stroke="#111" stroke-width="0.9" />
<line x1="780.00" y1="377.70" x2="780.00" y2="382.70" stroke="#111" stroke-width="0.9" />
<line x1="783.40" y1="374.90" x2="783.40" y2="382.70" stroke="#111" stroke-width="0.9" />
<line x1="786.40" y1="374.90" x2="786.40" y2="382.70" stroke="#111" stroke-width="0.9" />
<line x1="788.70" y1="373.70" x2="788.70" y2="382.70" stroke="#111" stroke-width="0.9" />
<line x1="791.50" y1="376.20" x2="791.50" y2="382.70" stroke="#111" stroke-width="0.9" />
<line x1="751.90" y1="395.60" x2="758.90" y2="395.60" stroke="#2a7562" stroke-width="1.4" />
<polygon points="747.10,392.90 751.40,394.50 751.40,396.70 747.10,398.30" stroke="#146a50" stroke-width="1.1" fill="#d8e9e2" stroke-linejoin="round"/>
<rect x="696.50" y="411.80" width="48.80" height="41.00" stroke="#17705a" stroke-width="1.5" fill="#fff"/>
<rect x="702.60" y="419.30" width="31.4" height="26.0" fill="none" stroke="#111" stroke-width="1.45"/>
<rect x="737.10" y="418.70" width="3.6" height="3.3" fill="#000"/>
<rect x="737.10" y="425.10" width="3.6" height="3.3" fill="#000"/>
<rect x="737.10" y="431.40" width="3.6" height="3.3" fill="#000"/>
<rect x="737.10" y="437.60" width="3.6" height="3.3" fill="#000"/>
<path d="M703.10,436.90 L705.50,434.40 L707.20,433.95 L709.00,433.00 L710.20,432.30 L719.20,432.50 L720.20,434.10 L721.20,432.50 L728.80,432.50 L730.00,433.70 L733.60,436.60" stroke="#1a1a1a" stroke-width="1.0" fill="none" stroke-linejoin="round"/>
<rect x="710.00" y="423.90" width="2.80" height="8.80" fill="#9a9a9a"/>
<rect x="715.10" y="426.70" width="2.50" height="6.00" fill="#9a9a9a"/>
<rect x="721.00" y="425.10" width="3.00" height="7.60" fill="#9a9a9a"/>
<rect x="726.30" y="423.90" width="1.60" height="8.80" fill="#9a9a9a"/>
<line x1="710.00" y1="423.70" x2="710.00" y2="432.70" stroke="#111" stroke-width="0.9" />
<line x1="712.80" y1="423.70" x2="712.80" y2="432.70" stroke="#111" stroke-width="0.9" />
<line x1="715.10" y1="426.00" x2="715.10" y2="432.70" stroke="#111" stroke-width="0.9" />
<line x1="717.60" y1="427.70" x2="717.60" y2="432.70" stroke="#111" stroke-width="0.9" />
<line x1="721.00" y1="424.90" x2="721.00" y2="432.70" stroke="#111" stroke-width="0.9" />
<line x1="724.00" y1="424.90" x2="724.00" y2="432.70" stroke="#111" stroke-width="0.9" />
<line x1="726.30" y1="423.70" x2="726.30" y2="432.70" stroke="#111" stroke-width="0.9" />
<line x1="729.10" y1="426.20" x2="729.10" y2="432.70" stroke="#111" stroke-width="0.9" />
<line x1="689.50" y1="445.60" x2="696.50" y2="445.60" stroke="#2a7562" stroke-width="1.4" />
<polygon points="684.70,442.90 689.00,444.50 689.00,446.70 684.70,448.30" stroke="#146a50" stroke-width="1.1" fill="#d8e9e2" stroke-linejoin="round"/>
<rect x="858.90" y="462.10" width="48.80" height="41.00" stroke="#17705a" stroke-width="1.5" fill="#fff"/>
<rect x="865.00" y="469.60" width="31.4" height="26.0" fill="none" stroke="#111" stroke-width="1.45"/>
<rect x="899.50" y="469.00" width="3.6" height="3.3" fill="#000"/>
<rect x="899.50" y="475.40" width="3.6" height="3.3" fill="#000"/>
<rect x="899.50" y="481.70" width="3.6" height="3.3" fill="#000"/>
<rect x="899.50" y="487.90" width="3.6" height="3.3" fill="#000"/>
<path d="M865.50,487.20 L867.90,484.70 L869.60,484.25 L871.40,483.30 L872.60,482.60 L881.60,482.80 L882.60,484.40 L883.60,482.80 L891.20,482.80 L892.40,484.00 L896.00,486.90" stroke="#1a1a1a" stroke-width="1.0" fill="none" stroke-linejoin="round"/>
<rect x="872.40" y="474.20" width="2.80" height="8.80" fill="#9a9a9a"/>
<rect x="877.50" y="477.00" width="2.50" height="6.00" fill="#9a9a9a"/>
<rect x="883.40" y="475.40" width="3.00" height="7.60" fill="#9a9a9a"/>
<rect x="888.70" y="474.20" width="1.60" height="8.80" fill="#9a9a9a"/>
<line x1="872.40" y1="474.00" x2="872.40" y2="483.00" stroke="#111" stroke-width="0.9" />
<line x1="875.20" y1="474.00" x2="875.20" y2="483.00" stroke="#111" stroke-width="0.9" />
<line x1="877.50" y1="476.30" x2="877.50" y2="483.00" stroke="#111" stroke-width="0.9" />
<line x1="880.00" y1="478.00" x2="880.00" y2="483.00" stroke="#111" stroke-width="0.9" />
<line x1="883.40" y1="475.20" x2="883.40" y2="483.00" stroke="#111" stroke-width="0.9" />
<line x1="886.40" y1="475.20" x2="886.40" y2="483.00" stroke="#111" stroke-width="0.9" />
<line x1="888.70" y1="474.00" x2="888.70" y2="483.00" stroke="#111" stroke-width="0.9" />
<line x1="891.50" y1="476.50" x2="891.50" y2="483.00" stroke="#111" stroke-width="0.9" />
<line x1="851.90" y1="495.90" x2="858.90" y2="495.90" stroke="#2a7562" stroke-width="1.4" />
<polygon points="847.10,493.20 851.40,494.80 851.40,497.00 847.10,498.60" stroke="#146a50" stroke-width="1.1" fill="#d8e9e2" stroke-linejoin="round"/>
<rect x="808.90" y="536.80" width="48.80" height="41.00" stroke="#17705a" stroke-width="1.5" fill="#fff"/>
<rect x="815.00" y="544.30" width="31.4" height="26.0" fill="none" stroke="#111" stroke-width="1.45"/>
<rect x="849.50" y="543.70" width="3.6" height="3.3" fill="#000"/>
<rect x="849.50" y="550.10" width="3.6" height="3.3" fill="#000"/>
<rect x="849.50" y="556.40" width="3.6" height="3.3" fill="#000"/>
<rect x="849.50" y="562.60" width="3.6" height="3.3" fill="#000"/>
<path d="M815.50,561.90 L817.90,559.40 L819.60,558.95 L821.40,558.00 L822.60,557.30 L831.60,557.50 L832.60,559.10 L833.60,557.50 L841.20,557.50 L842.40,558.70 L846.00,561.60" stroke="#1a1a1a" stroke-width="1.0" fill="none" stroke-linejoin="round"/>
<rect x="822.40" y="548.90" width="2.80" height="8.80" fill="#9a9a9a"/>
<rect x="827.50" y="551.70" width="2.50" height="6.00" fill="#9a9a9a"/>
<rect x="833.40" y="550.10" width="3.00" height="7.60" fill="#9a9a9a"/>
<rect x="838.70" y="548.90" width="1.60" height="8.80" fill="#9a9a9a"/>
<line x1="822.40" y1="548.70" x2="822.40" y2="557.70" stroke="#111" stroke-width="0.9" />
<line x1="825.20" y1="548.70" x2="825.20" y2="557.70" stroke="#111" stroke-width="0.9" />
<line x1="827.50" y1="551.00" x2="827.50" y2="557.70" stroke="#111" stroke-width="0.9" />
<line x1="830.00" y1="552.70" x2="830.00" y2="557.70" stroke="#111" stroke-width="0.9" />
<line x1="833.40" y1="549.90" x2="833.40" y2="557.70" stroke="#111" stroke-width="0.9" />
<line x1="836.40" y1="549.90" x2="836.40" y2="557.70" stroke="#111" stroke-width="0.9" />
<line x1="838.70" y1="548.70" x2="838.70" y2="557.70" stroke="#111" stroke-width="0.9" />
<line x1="841.50" y1="551.20" x2="841.50" y2="557.70" stroke="#111" stroke-width="0.9" />
<line x1="801.90" y1="570.60" x2="808.90" y2="570.60" stroke="#2a7562" stroke-width="1.4" />
<polygon points="797.10,567.90 801.40,569.50 801.40,571.70 797.10,573.30" stroke="#146a50" stroke-width="1.1" fill="#d8e9e2" stroke-linejoin="round"/>
</g>
</svg>
</div><div class="t" style="left:209.6px;top:69.8px"><span>CW Laser</span><br><span>Frequency = 193&nbsp; THz</span><br><span>Power = 0&nbsp; dBm</span></div><div class="t" style="left:197.1px;top:157.3px"><span>CW Laser&nbsp; 1</span><br><span>Frequency = 193.1&nbsp; THz</span><br><span>Power = 0&nbsp; dBm</span></div><div class="t" style="left:147.1px;top:232.3px"><span>CW Laser&nbsp; 2</span><br><span>Frequency = 193.2&nbsp; THz</span><br><span>Power = 0&nbsp; dBm</span></div><div class="t" style="left:97.1px;top:307.3px"><span>CW Laser&nbsp; 3</span><br><span>Frequency = 193.3&nbsp; THz</span><br><span>Power = 0&nbsp; dBm</span></div><div class="t" style="left:197.1px;top:382.3px"><span>CW Laser&nbsp; 4</span><br><span>Frequency = 193.4&nbsp; THz</span><br><span>Power = 0&nbsp; dBm</span></div><div class="t" style="left:72.1px;top:457.3px"><span>CW Laser&nbsp; 5</span><br><span>Frequency = 193.5&nbsp; THz</span><br><span>Power = 0&nbsp; dBm</span></div><div class="t" style="left:222.1px;top:495.1px"><span>CW Laser&nbsp; 6</span><br><span>Frequency = 193.6&nbsp; THz</span><br><span>Power = 0&nbsp; dBm</span></div><div class="t" style="left:109.6px;top:570.0px"><span>CW Laser&nbsp; 7</span><br><span>Frequency = 193.7&nbsp; THz</span><br><span>Power = 0&nbsp; dBm</span></div><div class="t" style="left:809.7px;top:119.9px"><span>Optical Spectrum Analyzer</span></div><div class="t" style="left:809.7px;top:219.9px"><span>Optical Spectrum Analyzer_1</span></div><div class="t" style="left:809.7px;top:294.9px"><span>Optical Spectrum Analyzer_2</span></div><div class="t" style="left:822.3px;top:357.5px"><span>Optical Spectrum Analyzer_3</span></div><div class="t" style="left:759.7px;top:407.5px"><span>Optical Spectrum Analyzer_4</span></div><div class="t" style="left:697.3px;top:457.5px"><span>Optical Spectrum Analyzer_5</span></div><div class="t" style="left:859.7px;top:507.8px"><span>Optical Spectrum Analyzer_6</span></div><div class="t" style="left:809.7px;top:582.5px"><span>Optical Spectrum Analyzer_7</span></div><div class="t" style="left:409.5px;top:592.5px"><span>Ideal Mux</span></div><div class="t" style="left:584.2px;top:579.9px"><span>WDM Phasar Demux 1xN</span></div>
</body></html>
